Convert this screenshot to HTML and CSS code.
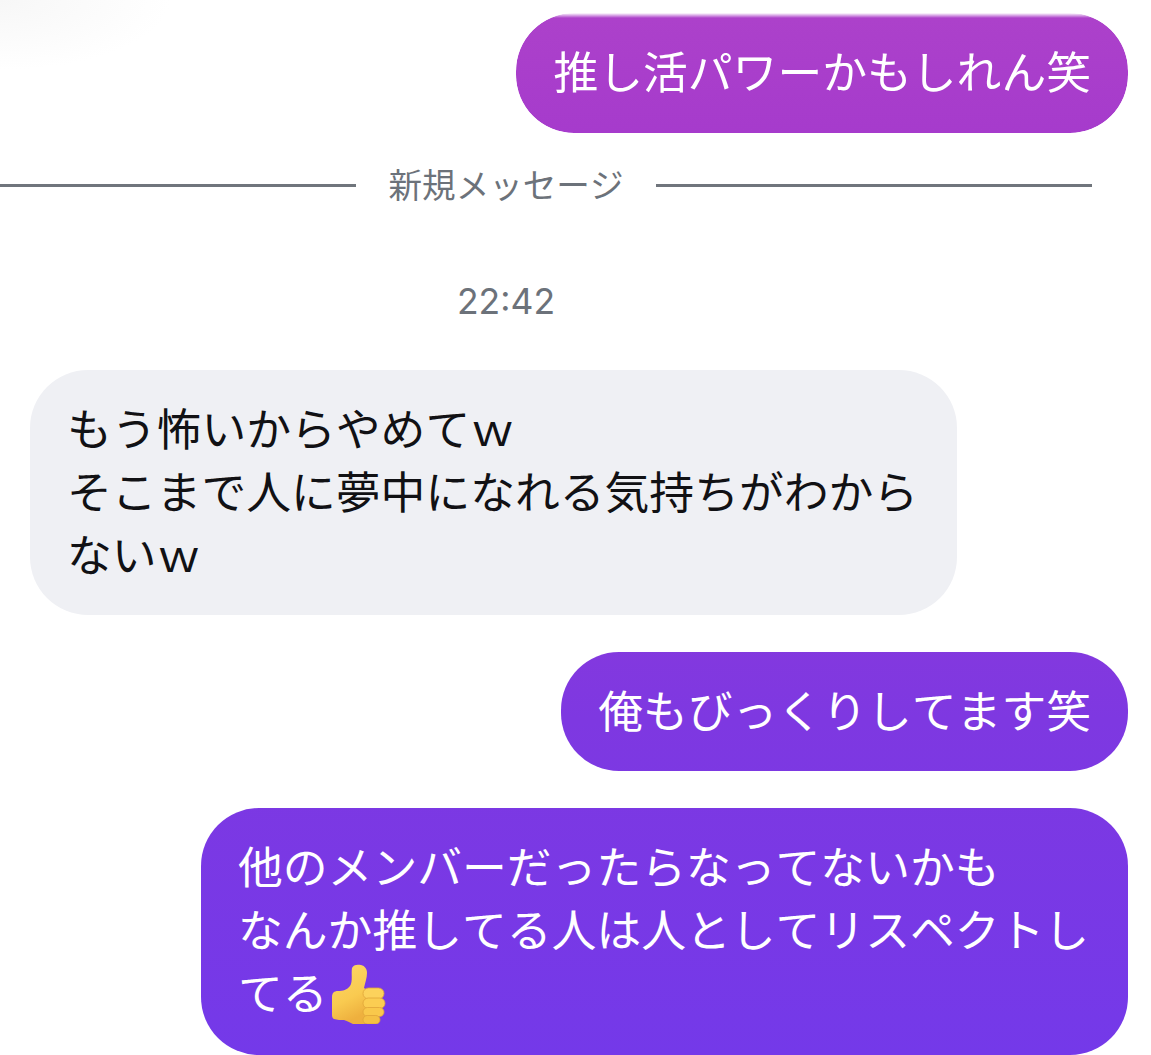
FILE: index.html
```html
<!DOCTYPE html>
<html lang="ja">
<head>
    <meta charset="UTF-8">
    <title>Chat</title>
    <link rel="stylesheet" href="styles.css">
</head>
<body>
    <div class="chat">
        <div class="bubble sent first">推し活パワーかもしれん笑</div>

        <div class="divider">
            <span class="divider-line"></span>
            <span class="divider-text">新規メッセージ</span>
            <span class="divider-line"></span>
        </div>

        <div class="time">22:42</div>

        <div class="bubble received">もう怖いからやめてｗ<br>そこまで人に夢中になれる気持ちがわからないｗ</div>
        <div class="bubble sent">俺もびっくりしてます笑</div>
        <div class="bubble sent last">他のメンバーだったらなってないかも<br>なんか推してる人は人としてリスペクトしてる<svg class="emoji" viewBox="6 4 58 60" aria-hidden="true">
            <defs>
                <linearGradient id="palm" x1="0" y1="0" x2="0.3" y2="1">
                    <stop offset="0" stop-color="#fdd868"/>
                    <stop offset="0.65" stop-color="#f9ca50"/>
                    <stop offset="1" stop-color="#eeb03e"/>
                </linearGradient>
            </defs>
            <path d="M30 8c1-3 5-4 9-3 4 1 6 4 6 8 0 5-2 10-3 15l3 2v33c-5 2-10 2-14 1-3-1-5-3-9-4-3 0-7 0-10-1-2-1-2-3-2-6V37c0-4 2-6 6-6 5 0 9-1 12-5 3-5 1-12 2-18z" fill="url(#palm)"/>
            <rect x="41" y="28" width="21" height="11" rx="5.5" fill="#fcd25c" stroke="#e0a438" stroke-width="0.8"/>
            <rect x="41" y="38" width="22" height="10.5" rx="5.2" fill="#fbcd52" stroke="#e0a438" stroke-width="0.8"/>
            <rect x="41" y="47.5" width="21" height="9" rx="4.5" fill="#f9c84b" stroke="#e0a438" stroke-width="0.8"/>
            <rect x="41" y="55.5" width="17" height="8.5" rx="4.2" fill="#f5c044" stroke="#e0a438" stroke-width="0.8"/>
        </svg></div>
    </div>
</body>
</html>
```

FILE: styles.css
```css
html, body {
    margin: 0;
    height: 1055px;
    overflow: hidden;
}
body {
    background: radial-gradient(ellipse 170px 70px at 0 0, #f7f7f7, #ffffff);
    font-family: "Noto Sans CJK JP", "Noto Sans", sans-serif;
    font-kerning: none;
}
.chat {
    display: flex;
    flex-direction: column;
    padding: 13px 23px 0 30px;
}
.bubble {
    box-sizing: border-box;
    max-width: 927px;
    padding: 25px 37px 31px;
    border-radius: 58px;
    font-size: 44.8px;
    line-height: 63px;
    margin-bottom: 37px;
}
.sent {
    align-self: flex-end;
    color: #fff;
    background: linear-gradient(180deg, #ad42ca 0, #a63bcc 130px, #7e38e1 720px, #7439e9 1055px) fixed;
}
.first {
    margin-bottom: 0;
    padding-bottom: 32px;
    -webkit-mask-image: linear-gradient(180deg, transparent 0, #000 5px);
    mask-image: linear-gradient(180deg, transparent 0, #000 5px);
}
.last {
    width: 927px;
    margin-bottom: 0;
}
.received {
    align-self: flex-start;
    width: 927px;
    color: #111114;
    background: #eff0f4;
}
.divider {
    display: flex;
    align-items: center;
    gap: 32px;
    height: 40px;
    margin: 32px 36px 0 -110px;
    color: #6c727a;
    font-size: 33.6px;
}
.divider-text {
    padding-bottom: 4px;
}
.divider-line {
    flex: 1;
    height: 3px;
    background: #70757c;
}
.time {
    margin: 77px 146px 48px 0;
    height: 40px;
    line-height: 40px;
    text-align: center;
    color: #6c727a;
    font-family: "Inter", "Liberation Sans", sans-serif;
    font-size: 35.5px;
}
.emoji {
    width: 58px;
    height: 60px;
    vertical-align: -14px;
}
```
